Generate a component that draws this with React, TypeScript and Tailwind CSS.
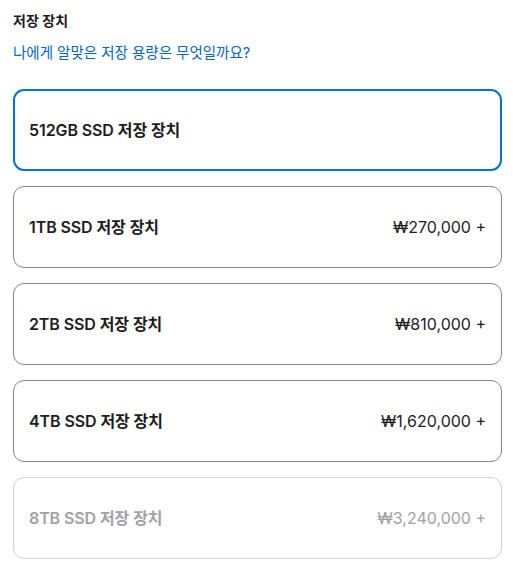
const options = [
  { name: "512GB SSD 저장 장치", price: "", selected: true },
  { name: "1TB SSD 저장 장치", price: "₩270,000 +" },
  { name: "2TB SSD 저장 장치", price: "₩810,000 +" },
  { name: "4TB SSD 저장 장치", price: "₩1,620,000 +" },
  { name: "8TB SSD 저장 장치", price: "₩3,240,000 +", disabled: true },
];

export default function App() {
  return (
    <div
      className="w-[513px] h-[572px] bg-white pl-[13px] pr-[11px] pt-[11px]"
      style={{ fontFamily: 'Inter, "Noto Sans CJK KR", sans-serif' }}
    >
      <h2 className="text-[14px] font-semibold text-[#1d1d1f] leading-[20px]">저장 장치</h2>
      <a className="block mt-[12px] text-[14.5px] text-[#0066cc] leading-[20px]">
        나에게 알맞은 저장 용량은 무엇일까요?
      </a>
      <div className="mt-[26px] flex flex-col gap-[15px]">
        {options.map((o) => (
          <div
            key={o.name}
            className={
              o.selected
                ? "h-[82px] rounded-[11px] border-2 border-[#0071e3] flex items-center justify-between pl-[14px] pr-[14px] text-[#1d1d1f]"
                : o.disabled
                ? "h-[82px] rounded-[11px] border border-[#d2d2d7] flex items-center justify-between pl-[15px] pr-[15px] text-[#a1a1a6]"
                : "h-[82px] rounded-[11px] border border-[#86868b] flex items-center justify-between pl-[15px] pr-[15px] text-[#1d1d1f]"
            }
          >
            <span className="text-[16px] font-semibold tracking-[-0.1px]">{o.name}</span>
            <span className="text-[16px]">{o.price}</span>
          </div>
        ))}
      </div>
    </div>
  );
}
